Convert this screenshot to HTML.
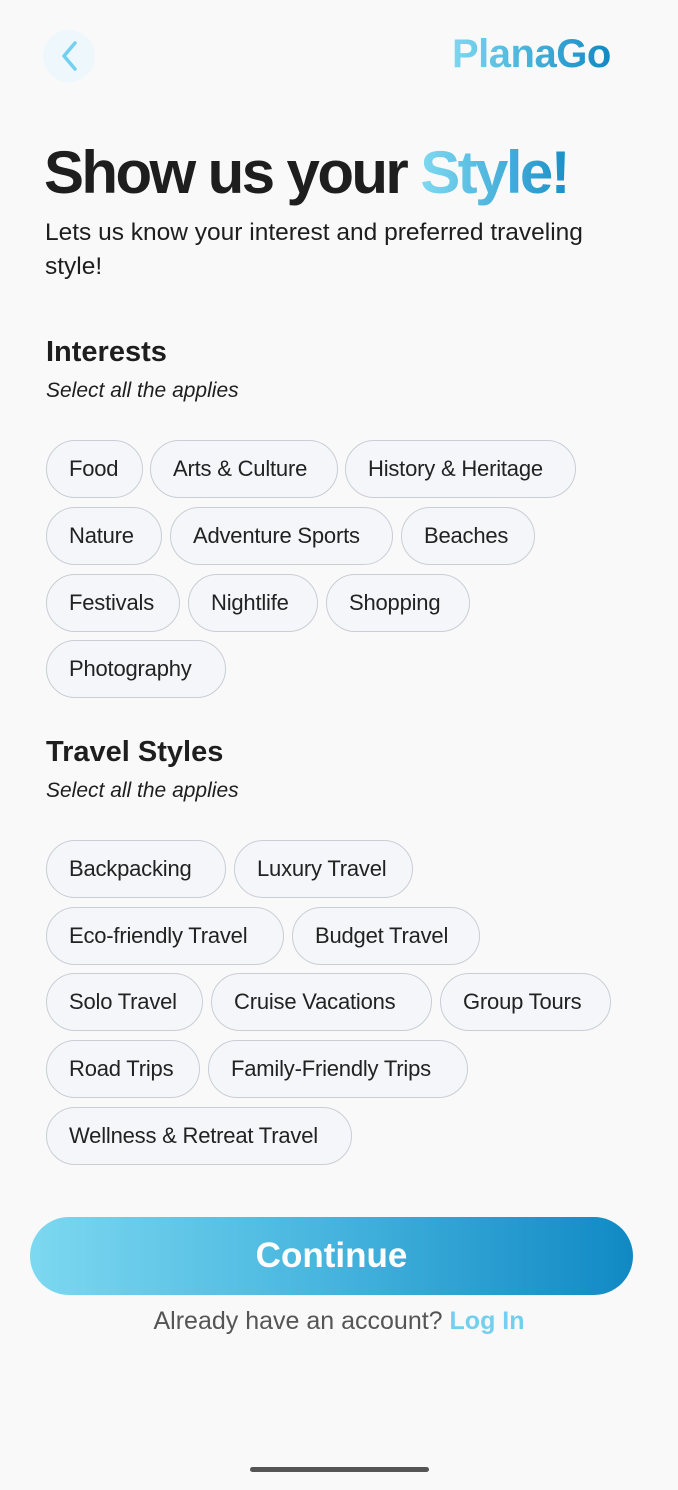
<!DOCTYPE html>
<html><head><meta charset="utf-8"><style>
*{margin:0;padding:0;box-sizing:border-box}
body{width:678px;height:1490px;background:#f9f9fa;font-family:"Liberation Sans",sans-serif;position:relative;overflow:hidden;color:#1e1e1e}
.a{position:absolute;white-space:nowrap}
.c{position:absolute;height:58px;border:1.5px solid #c9ced5;background:#f4f6fa;border-radius:29px;font-size:22px;color:#222;display:flex;align-items:center;justify-content:flex-start;padding-left:22px;white-space:nowrap;letter-spacing:-0.2px}
.grad{background:linear-gradient(90deg,#7dd8f0,#1089c4);-webkit-background-clip:text;background-clip:text;color:transparent}
</style></head><body>
<div class="a" style="left:43px;top:30px;width:52px;height:52px;border-radius:50%;background:#eef8fc"></div>
<svg class="a" style="left:57px;top:40px" width="24" height="32" viewBox="0 0 24 32"><path d="M18 3 L7 16 L18 29" fill="none" stroke="#74d0ef" stroke-width="3.5" stroke-linecap="round" stroke-linejoin="round"/></svg>
<div class="a grad" style="left:452px;top:32px;font-size:40px;font-weight:bold;letter-spacing:-0.5px">PlanaGo</div>
<div class="a" style="left:44px;top:138px;font-size:60px;font-weight:bold;letter-spacing:-2.6px">Show us your <span class="grad" style="background-image:linear-gradient(90deg,#80d9f1,#1a90c8)">Style!</span></div>
<div class="a" style="left:45px;top:216px;font-size:24.5px;line-height:34px;white-space:normal;width:580px">Lets us know your interest and preferred traveling style!</div>
<div class="a" style="left:46px;top:336px;font-size:29px;font-weight:bold">Interests</div>
<div class="a" style="left:46px;top:379px;font-size:21px;font-style:italic">Select all the applies</div>
<div class="c" style="left:46px;top:440px;width:97px">Food</div>
<div class="c" style="left:150px;top:440px;width:188px">Arts &amp; Culture</div>
<div class="c" style="left:345px;top:440px;width:231px">History &amp; Heritage</div>
<div class="c" style="left:46px;top:507px;width:116px">Nature</div>
<div class="c" style="left:170px;top:507px;width:223px">Adventure Sports</div>
<div class="c" style="left:401px;top:507px;width:134px">Beaches</div>
<div class="c" style="left:46px;top:574px;width:134px">Festivals</div>
<div class="c" style="left:188px;top:574px;width:130px">Nightlife</div>
<div class="c" style="left:326px;top:574px;width:144px">Shopping</div>
<div class="c" style="left:46px;top:640px;width:180px">Photography</div>
<div class="a" style="left:46px;top:736px;font-size:29px;font-weight:bold">Travel Styles</div>
<div class="a" style="left:46px;top:779px;font-size:21px;font-style:italic">Select all the applies</div>
<div class="c" style="left:46px;top:840px;width:180px">Backpacking</div>
<div class="c" style="left:234px;top:840px;width:179px">Luxury Travel</div>
<div class="c" style="left:46px;top:907px;width:238px">Eco-friendly Travel</div>
<div class="c" style="left:292px;top:907px;width:188px">Budget Travel</div>
<div class="c" style="left:46px;top:973px;width:157px">Solo Travel</div>
<div class="c" style="left:211px;top:973px;width:221px">Cruise Vacations</div>
<div class="c" style="left:440px;top:973px;width:171px">Group Tours</div>
<div class="c" style="left:46px;top:1040px;width:154px">Road Trips</div>
<div class="c" style="left:208px;top:1040px;width:260px">Family-Friendly Trips</div>
<div class="c" style="left:46px;top:1107px;width:306px">Wellness &amp; Retreat Travel</div>
<div class="a" style="left:30px;top:1217px;width:603px;height:78px;border-radius:39px;background:linear-gradient(90deg,#7dd8f0,#4bb8e0 45%,#1089c4);color:#fff;font-size:35px;font-weight:bold;display:flex;align-items:center;justify-content:center">Continue</div>
<div class="a" style="left:0;width:678px;top:1307px;text-align:center;font-size:25px;color:#555">Already have an account? <b style="color:#72d0ee">Log In</b></div>
<div class="a" style="left:250px;top:1467px;width:179px;height:5px;border-radius:3px;background:#555"></div>
</body></html>
